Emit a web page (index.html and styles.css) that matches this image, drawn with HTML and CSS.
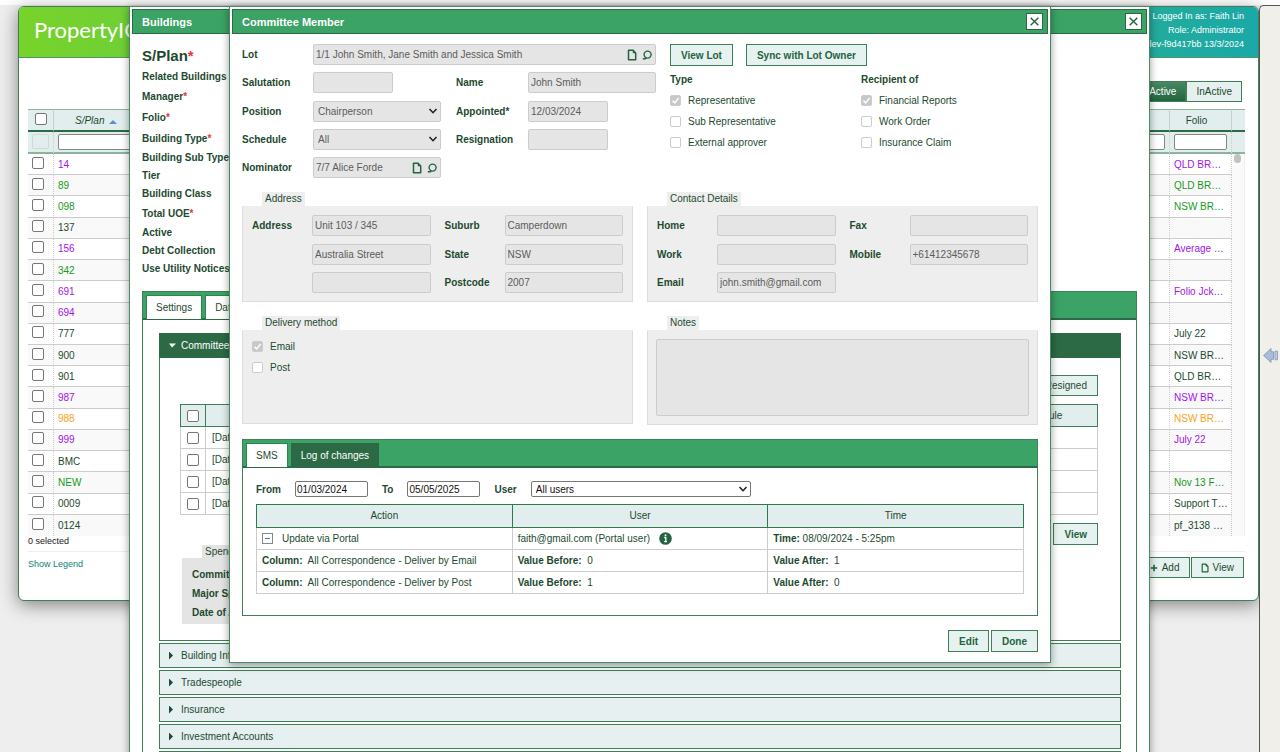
FILE: index.html
```html
<!DOCTYPE html>
<html lang="en">
  <head>
    <meta charset="utf-8" />
    <meta name="viewport" content="width=device-width, initial-scale=1" />
    <title>PropertyIQ - Committee Member</title>
    <link rel="stylesheet" href="styles.css">
  </head>

  <body>
    <!-- icons shared by the lookups and buttons -->
    <svg class="sprite" aria-hidden="true">
      <symbol id="icon-doc" viewBox="0 0 10 12">
        <path d="M1.500 1.200h4.600l2.600 2.700v6.900H1.500z" fill="none" stroke="currentColor" stroke-width="1.500" stroke-linejoin="round" />
        <path d="M5.800 1v3.200h3.200z" fill="currentColor" />
      </symbol>
      <symbol id="icon-search" viewBox="0 0 10 12">
        <circle cx="5.600" cy="5.600" r="3.500" fill="none" stroke="currentColor" stroke-width="1.400" />
        <path d="M0.800 9.800h2.600L4.200 8.600" fill="none" stroke="currentColor" stroke-width="1.500" />
      </symbol>
      <symbol id="icon-close" viewBox="0 0 10 10">
        <path d="M1.500 1.500l7 7M8.500 1.500l-7 7" stroke="currentColor" stroke-width="1.300" />
      </symbol>
    </svg>

    <div class="layout">
      <main class="page">
        <header class="header">
          <div class="header__logo">PropertyIQ</div>
          <div class="header__user">
            Logged In as: Faith Lin<br />
            Role: Administrator<br />
            dev-f9d417bb 13/3/2024
          </div>
        </header>

        <div class="toolbar">
          <button class="toggle toggle_active" type="button">Active</button>
          <button class="toggle" type="button">InActive</button>
        </div>

        <table class="grid">
          <colgroup>
            <col class="grid__col-check" />
            <col />
            <col class="grid__col-folio" />
            <col class="grid__col-scroll" />
          </colgroup>
          <thead>
            <tr class="grid__head">
              <th><input class="check" type="checkbox" aria-label="Select all" /></th>
              <th class="grid__sorted">S/Plan <span class="grid__arrow"></span></th>
              <th class="grid__folio">Folio</th>
              <th></th>
            </tr>
            <tr class="grid__filter">
              <th><input class="check check_ghost" type="checkbox" aria-label="Filter selected" disabled /></th>
              <th><input type="text" aria-label="Filter S/Plan" /></th>
              <th><input type="text" aria-label="Filter folio" /></th>
              <th></th>
            </tr>
          </thead>
          <tbody>
            <tr class="purple"><td><input class="check" type="checkbox" aria-label="14" /></td><td>14</td><td>QLD BR…</td><td class="grid__scroll" rowspan="18"><div class="grid__thumb"></div></td></tr>
            <tr class="green"><td><input class="check" type="checkbox" aria-label="89" /></td><td>89</td><td>QLD BR…</td></tr>
            <tr class="green"><td><input class="check" type="checkbox" aria-label="098" /></td><td>098</td><td>NSW BR…</td></tr>
            <tr><td><input class="check" type="checkbox" aria-label="137" /></td><td>137</td><td></td></tr>
            <tr class="purple"><td><input class="check" type="checkbox" aria-label="156" /></td><td>156</td><td>Average …</td></tr>
            <tr class="green"><td><input class="check" type="checkbox" aria-label="342" /></td><td>342</td><td></td></tr>
            <tr class="purple"><td><input class="check" type="checkbox" aria-label="691" /></td><td>691</td><td>Folio Jck…</td></tr>
            <tr class="purple"><td><input class="check" type="checkbox" aria-label="694" /></td><td>694</td><td></td></tr>
            <tr><td><input class="check" type="checkbox" aria-label="777" /></td><td>777</td><td>July 22</td></tr>
            <tr><td><input class="check" type="checkbox" aria-label="900" /></td><td>900</td><td>NSW BR…</td></tr>
            <tr><td><input class="check" type="checkbox" aria-label="901" /></td><td>901</td><td>QLD BR…</td></tr>
            <tr class="purple"><td><input class="check" type="checkbox" aria-label="987" /></td><td>987</td><td>NSW BR…</td></tr>
            <tr class="orange"><td><input class="check" type="checkbox" aria-label="988" /></td><td>988</td><td>NSW BR…</td></tr>
            <tr class="purple"><td><input class="check" type="checkbox" aria-label="999" /></td><td>999</td><td>July 22</td></tr>
            <tr><td><input class="check" type="checkbox" aria-label="BMC" /></td><td>BMC</td><td></td></tr>
            <tr class="green"><td><input class="check" type="checkbox" aria-label="NEW" /></td><td>NEW</td><td>Nov 13 F…</td></tr>
            <tr><td><input class="check" type="checkbox" aria-label="0009" /></td><td>0009</td><td>Support T…</td></tr>
            <tr><td><input class="check" type="checkbox" aria-label="0124" /></td><td>0124</td><td>pf_3138 …</td></tr>
          </tbody>
        </table>
        <p class="selected">0 selected</p>

        <footer class="footer">
          <a class="footer__legend" href="#">Show Legend</a>
          <div class="footer__buttons">
            <button class="btn btn_plain" type="button">
              <svg class="icon" viewBox="0 0 10 12"><path d="M5 2v8M1 6h8" stroke="currentColor" stroke-width="2" /></svg>Add
            </button>
            <button class="btn btn_plain" type="button">
              <svg class="icon"><use href="#icon-doc" /></svg>View
            </button>
          </div>
        </footer>
      </main>

      <aside class="side">
        <svg class="side__arrow" viewBox="0 0 14 14">
          <path d="M0.500 7L7.500 0.500V3.500h2.300v7H7.500v3z" fill="#a9bdd6" stroke="#8298b5" stroke-width=".8" />
          <path d="M11.200 3h2.300v8h-2.300z" fill="#c0d0e4" stroke="#8298b5" stroke-width=".8" />
        </svg>
      </aside>
    </div>

    <!-- Buildings window -->
    <section class="window window_buildings">
      <div class="window__title">
        <h2>Buildings</h2>
        <button class="window__close" type="button" aria-label="Close"><svg><use href="#icon-close" /></svg></button>
      </div>
      <div class="window__body">
        <h3 class="building-title">S/Plan<i>*</i></h3>
        <ul class="building-fields">
          <li>Related Buildings</li>
          <li class="required">Manager<i>*</i></li>
          <li class="required">Folio<i>*</i></li>
          <li class="required">Building Type<i>*</i></li>
          <li>Building Sub Type</li>
          <li>Tier</li>
          <li>Building Class</li>
          <li class="required">Total UOE<i>*</i></li>
          <li>Active</li>
          <li>Debt Collection</li>
          <li>Use Utility Notices</li>
        </ul>

        <div class="tabs">
          <div class="tabs__bar">
            <button class="tabs__tab" type="button">Settings</button>
            <button class="tabs__tab" type="button">Dates</button>
          </div>
          <div class="accordion">
            <button class="accordion__head accordion__head_open" type="button">Committee</button>
            <div class="accordion__body">
              <div class="committee-actions">
                <button class="btn btn_plain" type="button">Show Resigned</button>
              </div>
              <table class="committee">
                <colgroup>
                  <col class="committee__col-check" />
                  <col />
                  <col class="committee__col-schedule" />
                </colgroup>
                <thead>
                  <tr><th><input class="check" type="checkbox" aria-label="Select all members" /></th><th></th><th>Schedule</th></tr>
                </thead>
                <tbody>
                  <tr><td><input class="check" type="checkbox" aria-label="Select member 1" /></td><td>[Date]</td><td></td></tr>
                  <tr><td><input class="check" type="checkbox" aria-label="Select member 2" /></td><td>[Date]</td><td></td></tr>
                  <tr><td><input class="check" type="checkbox" aria-label="Select member 3" /></td><td>[Date]</td><td></td></tr>
                  <tr><td><input class="check" type="checkbox" aria-label="Select member 4" /></td><td>[Date]</td><td></td></tr>
                </tbody>
              </table>
              <div class="committee-buttons">
                <button class="btn" type="button">Add</button>
                <button class="btn" type="button">View</button>
              </div>
              <fieldset class="group group_dark">
                <legend>Spending</legend>
                <ul class="spending">
                  <li>Committee</li>
                  <li>Major Spending</li>
                  <li>Date of Approval</li>
                </ul>
              </fieldset>
            </div>
            <button class="accordion__head" type="button">Building Information</button>
            <button class="accordion__head" type="button">Tradespeople</button>
            <button class="accordion__head" type="button">Insurance</button>
            <button class="accordion__head" type="button">Investment Accounts</button>
            <button class="accordion__head" type="button" aria-label="More"></button>
          </div>
        </div>
      </div>
    </section>

    <!-- Committee Member window -->
    <section class="window window_member">
      <div class="window__title">
        <h2>Committee Member</h2>
        <button class="window__close" type="button" aria-label="Close"><svg><use href="#icon-close" /></svg></button>
      </div>
      <div class="window__body">
        <div class="member">
          <div class="member__fields">
            <label for="lot">Lot</label>
            <div class="lookup member__wide">
              <input id="lot" type="text" value="1/1 John Smith, Jane Smith and Jessica Smith" readonly />
              <button type="button" aria-label="Open lot"><svg class="icon"><use href="#icon-doc" /></svg></button>
              <button type="button" aria-label="Search lots"><svg class="icon"><use href="#icon-search" /></svg></button>
            </div>

            <label for="salutation">Salutation</label>
            <input class="field field_short" id="salutation" type="text" disabled />
            <label for="name">Name</label>
            <input class="field" id="name" type="text" value="John Smith" disabled />

            <label for="position">Position</label>
            <select class="field field_medium" id="position" disabled><option>Chairperson</option></select>
            <label for="appointed">Appointed*</label>
            <input class="field field_short" id="appointed" type="text" value="12/03/2024" disabled />

            <label for="schedule">Schedule</label>
            <select class="field field_medium" id="schedule" disabled><option>All</option></select>
            <label for="resignation">Resignation</label>
            <input class="field field_short" id="resignation" type="text" disabled />

            <label for="nominator">Nominator</label>
            <div class="lookup field_medium">
              <input id="nominator" type="text" value="7/7 Alice Forde" readonly />
              <button type="button" aria-label="Open nominator"><svg class="icon"><use href="#icon-doc" /></svg></button>
              <button type="button" aria-label="Search nominators"><svg class="icon"><use href="#icon-search" /></svg></button>
            </div>
          </div>

          <div class="member__side">
            <div class="member__buttons">
              <button class="btn" type="button">View Lot</button>
              <button class="btn" type="button">Sync with Lot Owner</button>
            </div>
            <div class="member__options">
              <div class="options">
                <h4>Type</h4>
                <label><input class="check" type="checkbox" checked disabled />Representative</label>
                <label><input class="check" type="checkbox" disabled />Sub Representative</label>
                <label><input class="check" type="checkbox" disabled />External approver</label>
              </div>
              <div class="options">
                <h4>Recipient of</h4>
                <label><input class="check" type="checkbox" checked disabled />Financial Reports</label>
                <label><input class="check" type="checkbox" disabled />Work Order</label>
                <label><input class="check" type="checkbox" disabled />Insurance Claim</label>
              </div>
            </div>
          </div>
        </div>

        <div class="groups">
          <fieldset class="group">
            <legend>Address</legend>
            <div class="group__box group__fields">
              <label for="address1">Address</label>
              <input class="field" id="address1" type="text" value="Unit 103 / 345" disabled />
              <label class="second" for="suburb">Suburb</label>
              <input class="field" id="suburb" type="text" value="Camperdown" disabled />
              <span></span>
              <input class="field" type="text" value="Australia Street" aria-label="Address line 2" disabled />
              <label class="second" for="state">State</label>
              <input class="field" id="state" type="text" value="NSW" disabled />
              <span></span>
              <input class="field" type="text" aria-label="Address line 3" disabled />
              <label class="second" for="postcode">Postcode</label>
              <input class="field" id="postcode" type="text" value="2007" disabled />
            </div>
          </fieldset>

          <fieldset class="group">
            <legend>Contact Details</legend>
            <div class="group__box group__fields">
              <label for="home">Home</label>
              <input class="field" id="home" type="text" disabled />
              <label class="second" for="fax">Fax</label>
              <input class="field" id="fax" type="text" disabled />
              <label for="work">Work</label>
              <input class="field" id="work" type="text" disabled />
              <label class="second" for="mobile">Mobile</label>
              <input class="field" id="mobile" type="text" value="+61412345678" disabled />
              <label for="email">Email</label>
              <input class="field" id="email" type="text" value="john.smith@gmail.com" disabled />
            </div>
          </fieldset>

          <fieldset class="group">
            <legend>Delivery method</legend>
            <div class="group__box options">
              <label><input class="check" type="checkbox" checked disabled />Email</label>
              <label><input class="check" type="checkbox" disabled />Post</label>
            </div>
          </fieldset>

          <fieldset class="group">
            <legend>Notes</legend>
            <div class="group__box">
              <textarea class="notes" aria-label="Notes" disabled></textarea>
            </div>
          </fieldset>
        </div>

        <div class="tabs">
          <div class="tabs__bar">
            <button class="tabs__tab" type="button">SMS</button>
            <button class="tabs__tab tabs__tab_dark" type="button">Log of changes</button>
          </div>
          <div class="log">
            <div class="log__filter">
              <label for="from">From</label>
              <input id="from" type="text" value="01/03/2024" />
              <label for="to">To</label>
              <input id="to" type="text" value="05/05/2025" />
              <label for="user">User</label>
              <select id="user"><option>All users</option></select>
            </div>
            <table class="log__table">
              <thead>
                <tr><th>Action</th><th>User</th><th>Time</th></tr>
              </thead>
              <tbody>
                <tr>
                  <td><div class="log__line"><button class="collapse" type="button" aria-label="Collapse"></button>Update via Portal</div></td>
                  <td>
                    <div class="log__line">
                      faith@gmail.com (Portal user)
                      <svg class="info" viewBox="0 0 13 13">
                        <circle cx="6.500" cy="6.500" r="6.300" fill="#23633f" />
                        <path d="M5.200 5.500h1.600v4M5.200 9.600h2.900" fill="none" stroke="#fff" stroke-width="1.300" />
                        <circle cx="6.500" cy="3.300" r="1" fill="#fff" />
                      </svg>
                    </div>
                  </td>
                  <td><b>Time:</b> 08/09/2024 - 5:25pm</td>
                </tr>
                <tr>
                  <td><b>Column:</b>&nbsp; All Correspondence - Deliver by Email</td>
                  <td><b>Value Before:</b>&nbsp; 0</td>
                  <td><b>Value After:</b>&nbsp; 1</td>
                </tr>
                <tr>
                  <td><b>Column:</b>&nbsp; All Correspondence - Deliver by Post</td>
                  <td><b>Value Before:</b>&nbsp; 1</td>
                  <td><b>Value After:</b>&nbsp; 0</td>
                </tr>
              </tbody>
            </table>
          </div>
        </div>

        <div class="window__footer">
          <button class="btn" type="button">Edit</button>
          <button class="btn" type="button">Done</button>
        </div>
      </div>
    </section>
  </body>
</html>
```
FILE: styles.css
```css
* {
  box-sizing: border-box;
}

body {
  margin: 0;
  height: 100vh;
  overflow: hidden;
  position: relative;
  font-family: "Liberation Sans", Arial, sans-serif;
  font-size: 10px;
  color: #1d4a2f;
  background: #eee;
}

h2,
h3,
h4,
p,
ul {
  margin: 0;
  padding: 0;
}

ul {
  list-style: none;
}

button,
input,
select,
textarea {
  margin: 0;
  font: inherit;
  color: inherit;
}

.sprite {
  position: absolute;
  width: 0;
  height: 0;
}

.icon {
  width: 10px;
  height: 12px;
  flex: none;
  color: #23633f;
}

/* page */

.layout {
  display: flex;
  height: 100%;
  border-top: 5px solid #fff;
}

.page {
  flex: 1;
  align-self: flex-start;
  margin: 1px 0 0 18px;
  background: #fff;
  border: 1px solid #3f7f58;
  border-radius: 6px;
  box-shadow: 0 4px 18px rgba(0, 0, 0, 0.45);
}

.header {
  display: flex;
  justify-content: space-between;
  height: 51px;
  border-bottom: 1px solid #4a9a68;
  border-radius: 5px 5px 0 0;
  color: #fff;
  background: linear-gradient(to right, #78d32a, #1aa8a8);
}

.header__logo {
  padding-left: 15px;
  font-family: Lato, sans-serif;
  font-size: 22px;
  line-height: 46px;
}

.header__user {
  padding: 2px 14px 0 0;
  font-size: 9px;
  line-height: 14px;
  text-align: right;
}

.toolbar {
  display: flex;
  justify-content: flex-end;
  padding: 23px 16px 7px 0;
}

.toggle {
  height: 21px;
  padding: 0 9px;
  border: 1px solid #3f7f58;
  color: #1d4a2f;
  background: #e6f0f0;
}

.toggle_active {
  color: #fff;
  background: linear-gradient(#478a62, #23633f);
}

.grid {
  width: calc(100% - 22px);
  height: 427px;
  margin-left: 9px;
  border-collapse: separate;
  border-spacing: 0;
  table-layout: fixed;
}

.grid__col-check {
  width: 26px;
}

.grid__col-folio {
  width: 62px;
}

.grid__col-scroll {
  width: 13px;
}

.grid th,
.grid td {
  padding: 0 4px;
  font-weight: normal;
  white-space: nowrap;
}

.grid th {
  background: #e2eeee;
  border-right: 1px solid #ccc;
}

.grid__head {
  height: 23px;
}

.grid__head th {
  border-top: 1px solid #8ab49c;
  border-bottom: 2px solid #2c6a45;
}

.grid__filter {
  height: 22px;
}

.grid__filter th {
  border-right-style: dotted;
  border-bottom: 2px solid #8ab49c;
}

.grid th:last-child {
  border-right: 0;
}

.grid th.grid__sorted {
  padding-left: 21px;
  font-style: italic;
  text-align: left;
}

.grid th.grid__folio {
  padding-right: 12px;
}

.grid__arrow {
  display: inline-block;
  margin-left: 2px;
  border: 4px solid transparent;
  border-top: 0;
  border-bottom-color: #5b8fd0;
}

.grid__filter input[type="text"] {
  display: block;
  width: 100%;
  height: 16px;
  padding: 0;
  border: 1px solid #858585;
  border-radius: 2px;
  background: #fff;
}

.grid td {
  height: 20px;
  padding-top: 1px;
  line-height: 12px;
  border-bottom: 1px solid #ccc;
  border-right: 1px dotted #ccc;
}

.grid tbody tr:nth-child(even) td {
  background: #f9f9f9;
}

.grid tbody tr:last-child td {
  border-bottom: 0;
}

.grid td:first-child {
  line-height: 0;
  padding-bottom: 4px;
}

.grid td.grid__scroll {
  padding: 0 2px;
  vertical-align: top;
  background: #fafafa;
  border: 0;
  border-right: 1px solid #eee;
}

.grid__thumb {
  width: 7px;
  height: 9px;
  border-radius: 4px;
  background: #c1c1c1;
}

.purple {
  color: #a314e8;
}

.green {
  color: #17991b;
}

.orange {
  color: #f9a11b;
}

.selected {
  padding-left: 9px;
  font-size: 9px;
  line-height: 10px;
  color: #222;
}

.footer {
  display: flex;
  justify-content: space-between;
  margin: 5px 13px 0 9px;
  padding: 5px 1px 22px 0;
  border-top: 1px solid #eee;
}

.footer__legend {
  font-size: 9px;
  line-height: 14px;
  color: #0f8277;
  text-decoration: none;
}

.footer__buttons {
  display: flex;
  gap: 1px;
}

.footer__buttons .btn {
  padding: 0 9px;
}

.footer__buttons .icon {
  width: 8px;
  height: 10px;
}

.side {
  display: flex;
  align-items: center;
  width: 21px;
  padding-left: 3px;
  border-left: 1px solid #555;
  border-top: 1px solid #555;
  border-radius: 5px 0 0 0;
  background: #f0efe9;
}

.side__arrow {
  width: 15px;
  height: 15px;
  margin-bottom: 48px;
}

/* controls */

.check {
  appearance: none;
  width: 12px;
  height: 12px;
  flex: none;
  border: 1px solid #767676;
  border-radius: 2px;
  background: #fff;
}

.check:disabled {
  width: 11px;
  height: 11px;
  border-color: #ccc;
}

.check:disabled:checked {
  background: #c8c8c8 url("data:image/svg+xml;charset=utf8,%3Csvg xmlns='http://www.w3.org/2000/svg' viewBox='0 0 9 9'%3E%3Cpath d='M1.500 4.700l2.200 2.200 4-5' fill='none' stroke='%23fff' stroke-width='1.500'/%3E%3C/svg%3E");
}

.check.check_ghost {
  width: 17px;
  height: 15px;
  border-color: #ccdada;
  background: transparent;
}

.btn {
  display: flex;
  align-items: center;
  justify-content: center;
  gap: 4px;
  height: 22px;
  padding: 0 10px;
  border: 1px solid #3f7f58;
  font-weight: bold;
  color: #23633f;
  background: #e6f2f0;
}

.btn_plain {
  height: 21px;
  font-weight: normal;
  color: #1d4a2f;
}

.field,
.lookup {
  width: 100%;
  height: 21px;
  padding: 0 2px;
  border: 1px solid #ccc;
  border-radius: 2px;
  color: #5c5c5c;
  background-color: #e5e5e5;
}

.field_short {
  width: 80px;
}

.field_medium {
  width: 128px;
}

select {
  appearance: none;
  background: #fff url("data:image/svg+xml;charset=utf8,%3Csvg xmlns='http://www.w3.org/2000/svg' viewBox='0 0 10 8'%3E%3Cpath d='M1.500 2l3.500 3.700L8.500 2' fill='none' stroke='%23222' stroke-width='1.600'/%3E%3C/svg%3E") no-repeat right 2px center;
  background-size: 10px 8px;
}

select.field {
  padding: 0 4px;
  opacity: 1;
  background-color: #e5e5e5;
}

.lookup {
  display: flex;
  align-items: center;
  gap: 5px;
  padding-right: 3px;
}

.lookup input {
  flex: 1;
  min-width: 0;
  padding: 0;
  border: 0;
  outline: 0;
  background: none;
}

.lookup button {
  display: flex;
  padding: 0;
  border: 0;
  background: none;
}

.options label {
  display: flex;
  align-items: center;
  gap: 7px;
  line-height: 21px;
}

/* windows */

.window {
  position: absolute;
  top: 6px;
  padding: 2px;
  border: 1px solid #4a8a65;
  background: #fff;
  box-shadow: 0 2px 8px rgba(0, 0, 0, 0.4);
}

.window_buildings {
  left: 129px;
  right: 130px;
  min-height: 100%;
}

.window_member {
  left: 229px;
  right: 229px;
}

.window__title {
  display: flex;
  align-items: center;
  justify-content: space-between;
  height: 25px;
  padding: 0 4px 0 9px;
  border: 1px solid #2c6a45;
  color: #fff;
  background: #3ba366;
}

.window__title h2 {
  font-size: 11px;
}

.window__close {
  display: flex;
  align-items: center;
  justify-content: center;
  width: 17px;
  height: 17px;
  padding: 0;
  border: 1px solid #2c6a45;
  color: #23633f;
  background: #fff;
}

.window__close svg {
  width: 11px;
  height: 11px;
}

.window__body {
  padding: 10px 10px 8px;
}

.window__footer {
  display: flex;
  justify-content: flex-end;
  gap: 2px;
  margin-top: 14px;
}

.building-title {
  font-size: 15px;
  line-height: 24px;
}

.building-fields {
  margin-bottom: 13px;
  font-weight: bold;
  line-height: 18px;
}

.building-fields .required {
  line-height: 21px;
}

.building-title i,
.required i {
  font-style: normal;
  color: #e5343c;
}

/* tabs */

.tabs {
  border: 1px solid #3f7f58;
}

.tabs__bar {
  display: flex;
  gap: 3px;
  height: 28px;
  padding: 3px 3px 0;
  border-bottom: 2px solid #2c6a45;
  background: #3ba366;
}

.tabs__tab {
  height: 24px;
  padding: 0 9px;
  border: 1px solid #2c8550;
  border-bottom: 0;
  background: #fff;
}

.tabs__tab_dark {
  color: #fff;
  border-color: #2c6a45;
  background: #2c6a45;
}

/* accordion */

.accordion {
  display: flex;
  flex-direction: column;
  gap: 2px;
  padding: 13px 15px 0 16px;
}

.accordion__head {
  display: flex;
  align-items: center;
  height: 25px;
  padding: 0 0 0 9px;
  border: 1px solid #3f7f58;
  background: #e6f0f1;
}

.accordion__head::before {
  content: "";
  width: 12px;
  height: 8px;
  background: #1d4a2f;
  clip-path: polygon(0 0, 4px 4px, 0 8px);
}

.accordion__head_open {
  margin-bottom: -2px;
  color: #fff;
  border-color: #2c6a45;
  background: #2c6a45;
}

.accordion__head_open::before {
  background: #fff;
  clip-path: polygon(0 2px, 7px 2px, 3px 6px);
}

.accordion__body {
  padding: 17px 22px 16px 20px;
  border: 1px solid #3f7f58;
  border-top: 0;
}

.committee-actions,
.committee-buttons {
  display: flex;
  justify-content: flex-end;
  gap: 2px;
}

.committee-actions {
  margin-bottom: 8px;
}

.committee-buttons {
  margin-top: 8px;
}

.committee {
  width: 100%;
  border-collapse: collapse;
  table-layout: fixed;
}

.committee__col-check {
  width: 25px;
}

.committee__col-schedule {
  width: 112px;
}

.committee th,
.committee td {
  height: 22px;
  padding: 0 6px;
  font-weight: normal;
  line-height: 12px;
  border: 1px solid #ccc;
}

.committee th {
  border-color: #3f7f58;
  background: #e2eeee;
}

.committee input {
  display: block;
}

.spending {
  width: 60%;
  margin: 0 2px;
  padding: 7px 10px 2px;
  font-weight: bold;
  line-height: 19px;
  background: #e4e4e4;
}

/* member */

.member {
  display: flex;
  gap: 14px;
}

.member__fields {
  display: grid;
  grid-template-columns: 71px 143px 72px 128px;
  align-content: space-between;
  align-items: center;
  min-height: 134px;
  font-weight: bold;
}

.member__fields input,
.member__fields select {
  font-weight: normal;
}

.member__wide {
  grid-column: span 3;
}

.member__buttons {
  display: flex;
  gap: 13px;
  margin-bottom: 4px;
}

.member__options {
  display: grid;
  grid-template-columns: 191px 1fr;
}

.options h4 {
  margin-bottom: 1px;
  font-size: 10px;
  line-height: 19px;
}

.groups {
  display: grid;
  grid-template-columns: 1fr 1fr;
  gap: 14px;
  margin: 14px 0;
}

.group {
  display: flex;
  flex-direction: column;
  min-width: 0;
  margin: 0;
  padding: 0;
  border: 0;
}

.group legend {
  margin-left: 20px;
  padding: 0 3px;
  line-height: 14px;
  background: #eee;
}

.group.group_dark legend {
  margin-left: 22px;
  line-height: 13px;
  background: #e4e4e4;
}

.group__box {
  min-height: 94px;
  padding: 8px;
  border: 1px solid #ddd;
  border-top-color: #eee;
  background: #eee;
}

.group__box.options {
  padding-top: 5px;
  padding-left: 9px;
}

.group__fields {
  display: grid;
  grid-template-columns: 60px 1fr 74px 1fr;
  row-gap: 7px;
  align-content: space-between;
  align-items: center;
  min-height: 96px;
  padding: 8px 9px;
  font-weight: bold;
}

.group__fields .second {
  padding-left: 14px;
}

.group__fields input {
  font-weight: normal;
}

.notes {
  display: block;
  width: 100%;
  height: 77px;
  border: 1px solid #ccc;
  border-radius: 2px;
  resize: none;
  background: #e5e5e5;
}

/* log of changes */

.log {
  padding: 13px 13px 21px;
}

.log__filter {
  display: flex;
  align-items: center;
  gap: 14px;
  margin-bottom: 7px;
  font-weight: bold;
}

.log__filter input,
.log__filter select {
  height: 16px;
  padding: 0 1px;
  border: 1px solid #767676;
  border-radius: 2px;
  font-weight: normal;
  color: #111;
}

.log__filter input {
  width: 73px;
}

.log__filter select {
  width: 220px;
  padding: 0 4px;
}

.log__table {
  width: 100%;
  border-collapse: collapse;
  table-layout: fixed;
}

.log__table th,
.log__table td {
  height: 22px;
  padding: 0 5px;
  font-weight: normal;
  line-height: 12px;
  border: 1px solid #ccc;
}

.log__table th {
  height: 23px;
  border-color: #2f7a4d;
  background: #e2eeee;
}

.log__line {
  display: flex;
  align-items: center;
  gap: 9px;
}

.collapse {
  display: flex;
  align-items: center;
  justify-content: center;
  width: 11px;
  height: 11px;
  padding: 0;
  border: 1px solid #888;
  background: #fff;
}

.collapse::before {
  content: "";
  width: 5px;
  height: 1px;
  background: #3c78b4;
}

.info {
  width: 13px;
  height: 13px;
}
```
